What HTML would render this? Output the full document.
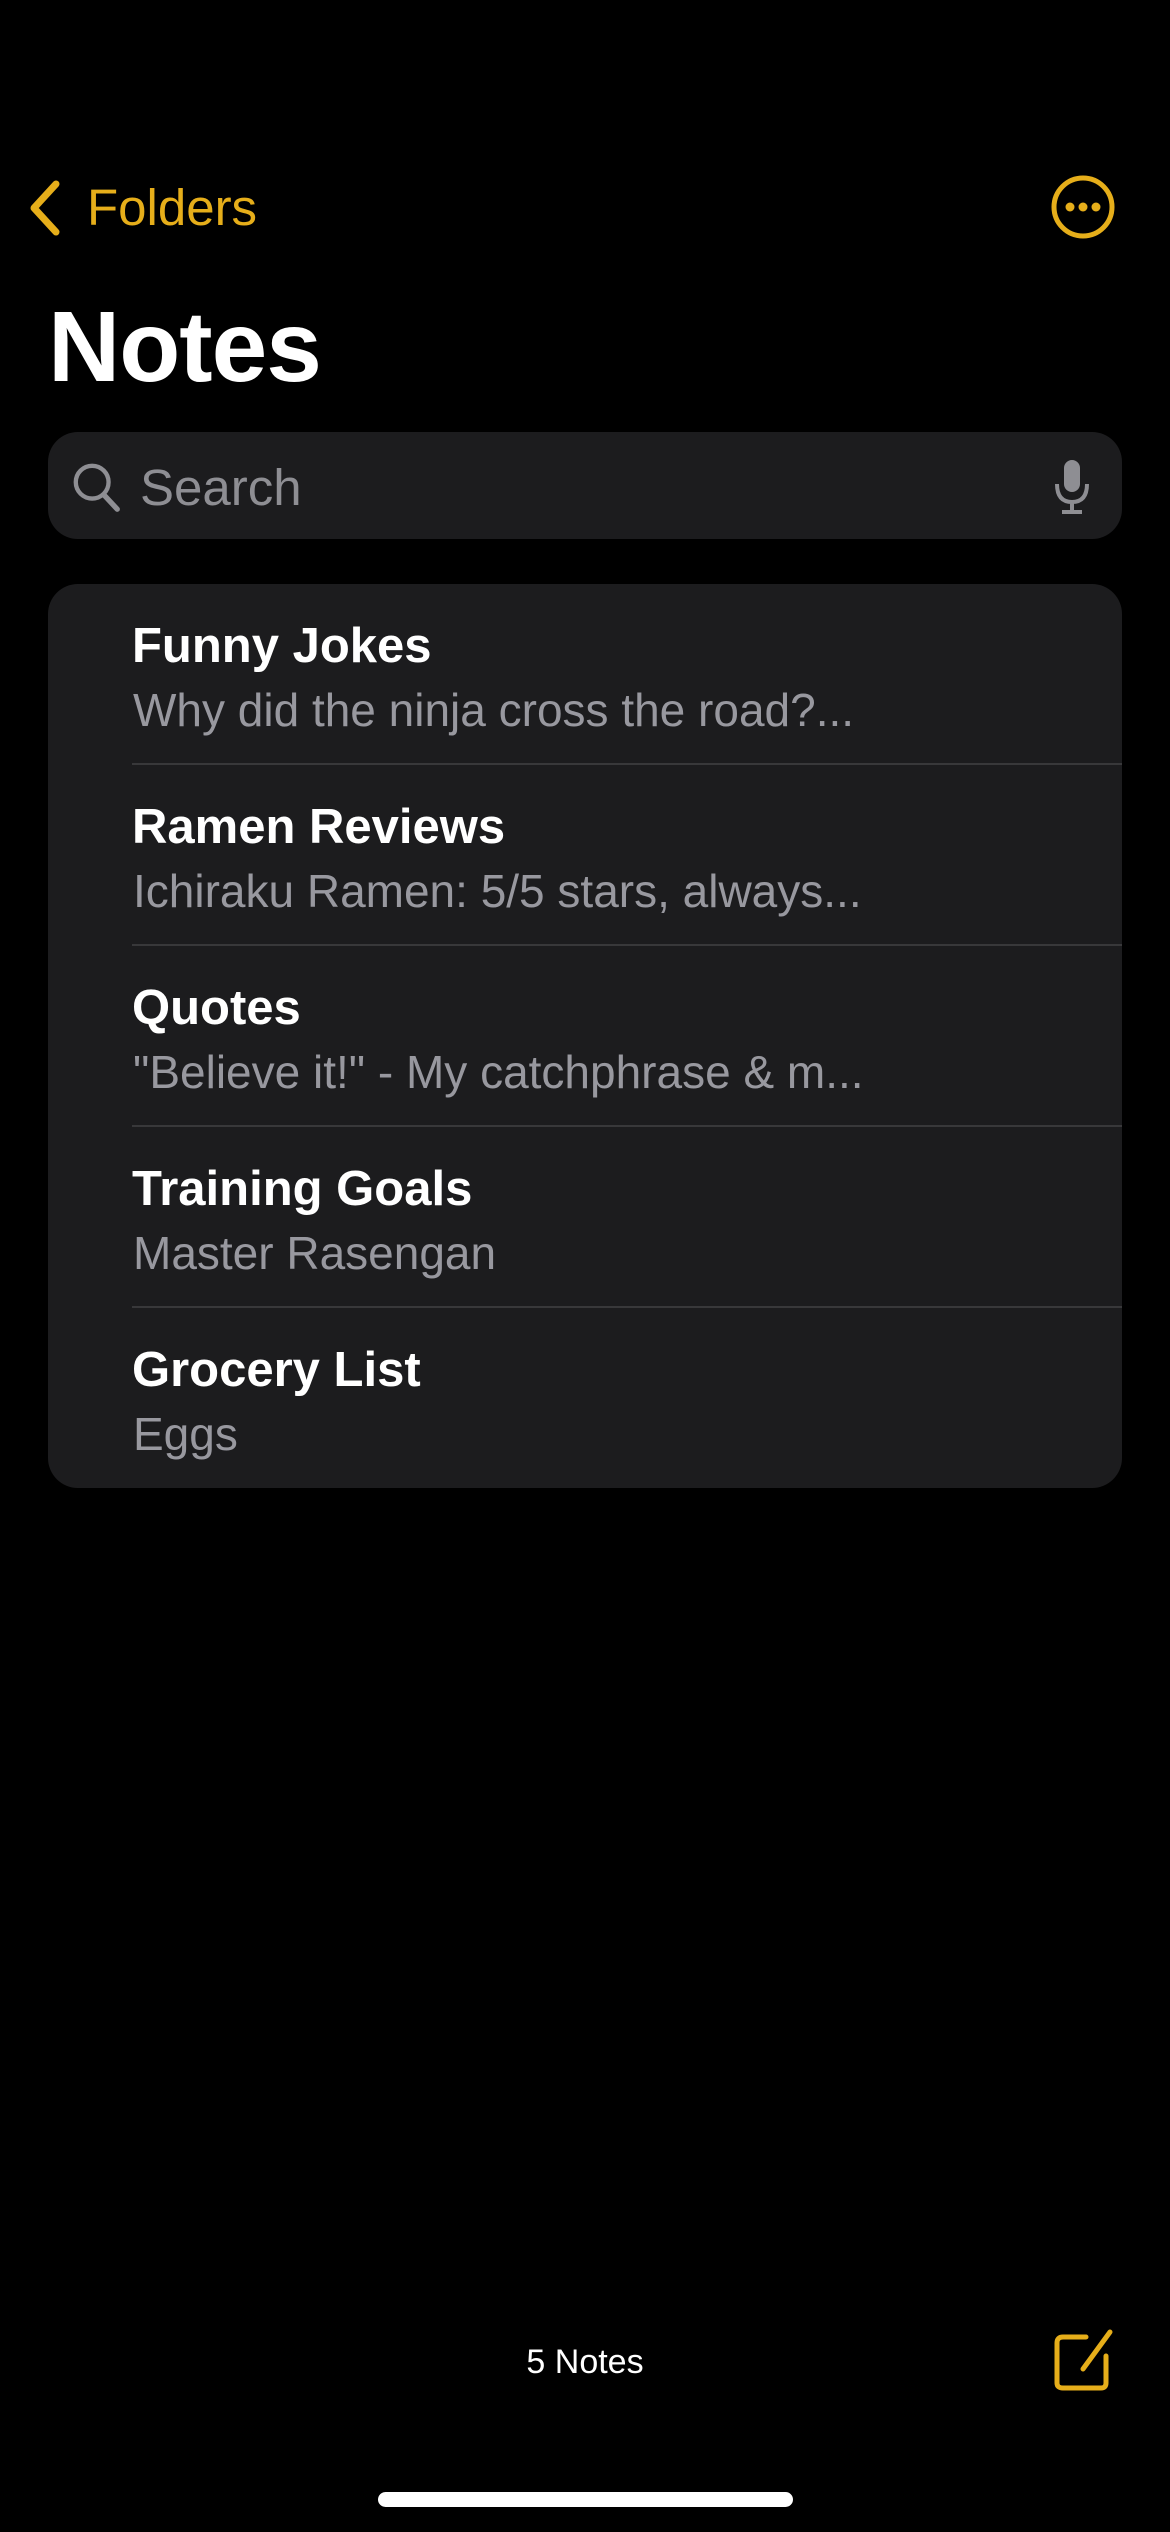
<!DOCTYPE html>
<html><head><meta charset="utf-8"><style>
body{margin:0;width:1170px;height:2532px;background:#000;position:relative;overflow:hidden;font-family:"Liberation Sans",sans-serif;color:#fff}
.a{position:absolute}
.card{left:48px;top:584px;width:1074px;height:904px;background:#1c1c1e;border-radius:30px;overflow:hidden}
.row{position:absolute;left:0;width:1074px;height:181px}
.t{position:absolute;left:84px;top:34px;font-size:49px;font-weight:bold;white-space:nowrap}
.s{position:absolute;left:85px;top:99px;font-size:46px;color:#98989f;white-space:nowrap}
.sep{position:absolute;left:84px;right:0;bottom:0;height:2px;background:#38383a}
</style></head><body>
<svg class="a" style="left:22px;top:178px" width="44" height="60" viewBox="0 0 44 60"><path d="M34 6 L12 30 L34 54" fill="none" stroke="#e6ae1a" stroke-width="7" stroke-linecap="round" stroke-linejoin="round"/></svg>
<div class="a" style="left:87px;top:178px;font-size:51px;color:#e6ae1a">Folders</div>
<svg class="a" style="left:1050px;top:174px" width="66" height="66" viewBox="0 0 66 66"><circle cx="33" cy="33" r="29" fill="none" stroke="#e6ae1a" stroke-width="5"/><circle cx="20" cy="33" r="4.5" fill="#e6ae1a"/><circle cx="33" cy="33" r="4.5" fill="#e6ae1a"/><circle cx="46" cy="33" r="4.5" fill="#e6ae1a"/></svg>
<div class="a" style="left:48px;top:290px;font-size:100px;font-weight:bold;letter-spacing:-1px">Notes</div>
<div class="a" style="left:48px;top:432px;width:1074px;height:107px;background:#1c1c1e;border-radius:30px"></div>
<svg class="a" style="left:70px;top:460px" width="54" height="54" viewBox="0 0 56 56"><circle cx="23" cy="23" r="17" fill="none" stroke="#8e8e93" stroke-width="4.5"/><path d="M35 36 L49 51" stroke="#8e8e93" stroke-width="5.5" stroke-linecap="round"/></svg>
<div class="a" style="left:140px;top:458px;font-size:51px;color:#8e8e93">Search</div>
<svg class="a" style="left:1052px;top:458px" width="40" height="58" viewBox="0 0 40 58"><rect x="12" y="2" width="16" height="32" rx="8" fill="#8e8e93"/><path d="M5 26 Q5 44 20 44 Q35 44 35 26" fill="none" stroke="#8e8e93" stroke-width="4"/><path d="M20 44 V53 M10 54 H30" stroke="#8e8e93" stroke-width="4"/></svg>
<div class="a card">
<div class="row" style="top:0"><div class="t">Funny Jokes</div><div class="s">Why did the ninja cross the road?...</div><div class="sep"></div></div>
<div class="row" style="top:181px"><div class="t">Ramen Reviews</div><div class="s">Ichiraku Ramen: 5/5 stars, always...</div><div class="sep"></div></div>
<div class="row" style="top:362px"><div class="t">Quotes</div><div class="s">"Believe it!" - My catchphrase &amp; m...</div><div class="sep"></div></div>
<div class="row" style="top:543px"><div class="t">Training Goals</div><div class="s">Master Rasengan</div><div class="sep"></div></div>
<div class="row" style="top:724px"><div class="t">Grocery List</div><div class="s">Eggs</div></div>
</div>
<div class="a" style="left:0;width:1170px;top:2343px;text-align:center;font-size:34px">5 Notes</div>
<svg class="a" style="left:1050px;top:2326px" width="70" height="68" viewBox="0 0 70 68"><path d="M36 11 H13 Q7 11 7 17 V57 Q7 62 13 62 H51 Q56 62 56 57 V30" fill="none" stroke="#e6ae1a" stroke-width="5" stroke-linecap="round"/><path d="M60 6 L33 43" stroke="#e6ae1a" stroke-width="5" stroke-linecap="round"/></svg>
<div class="a" style="left:378px;top:2492px;width:415px;height:15px;background:#fff;border-radius:8px"></div>
</body></html>
